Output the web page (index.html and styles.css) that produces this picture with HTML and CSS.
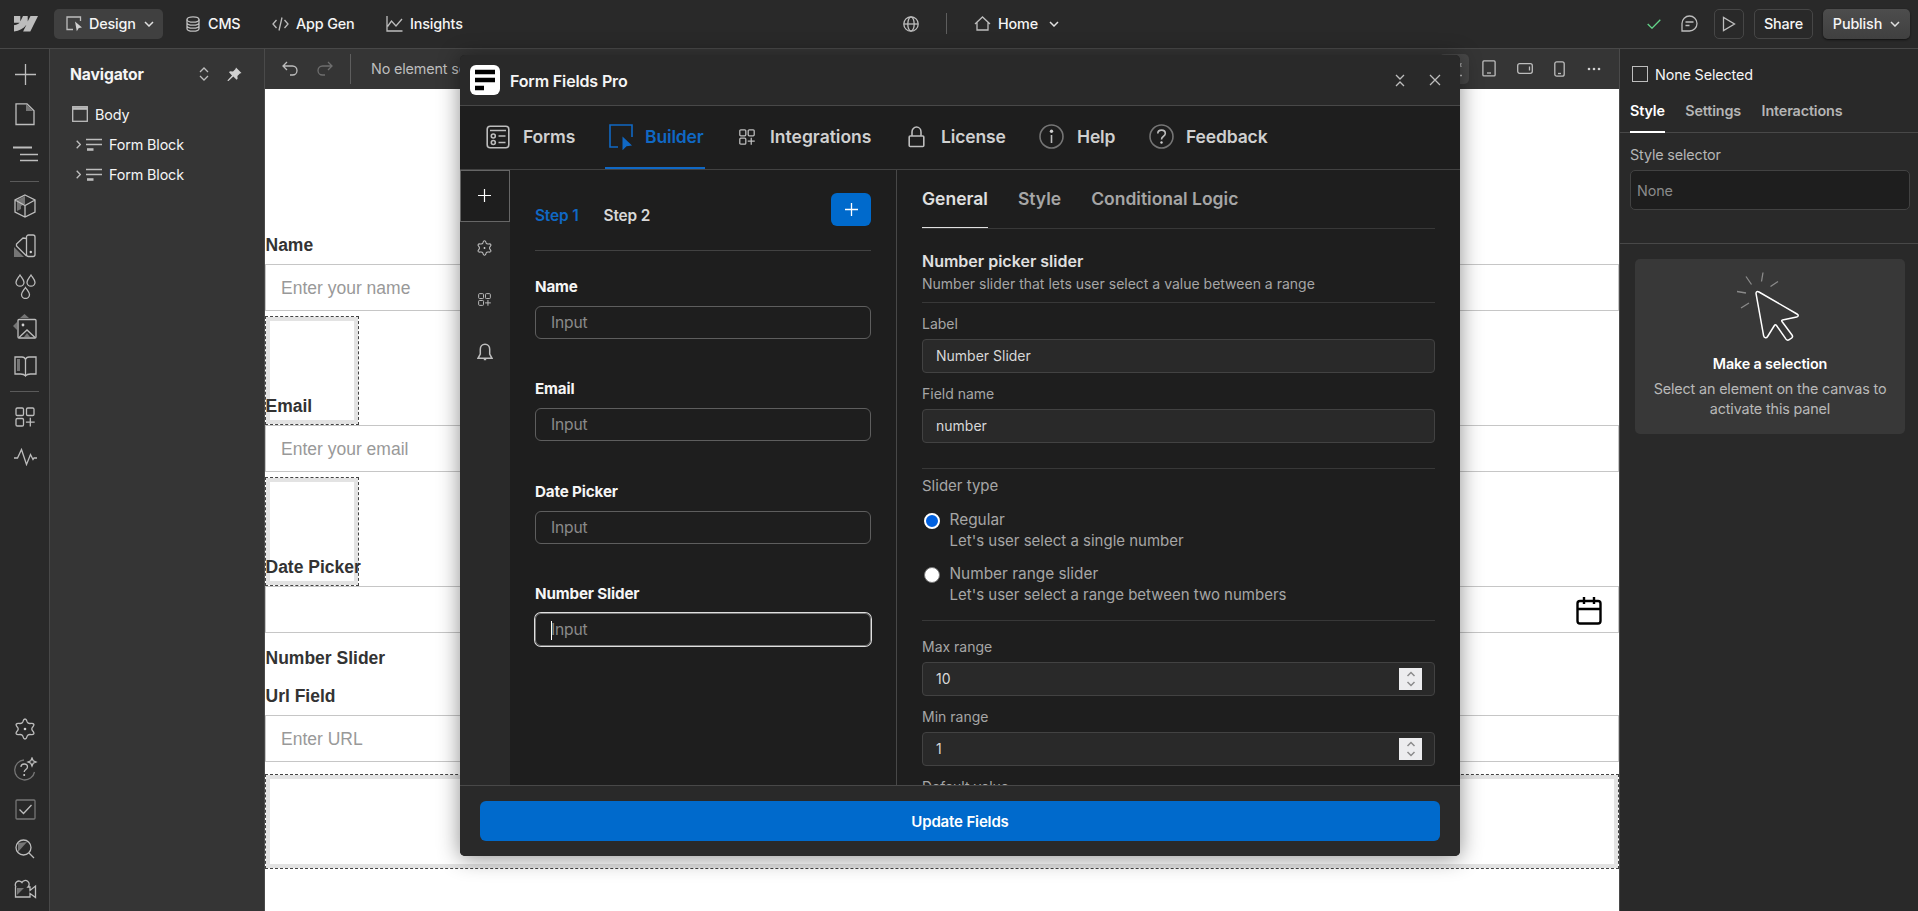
FILE: index.html
```
<!DOCTYPE html>
<html lang="en">
<head>
    <meta charset="UTF-8">
    <meta name="viewport" content="width=device-width, initial-scale=1.0">
    <title>Form Fields Pro</title>
    <link rel="stylesheet" href="styles.css">
</head>
<body>
    <svg class="defs" width="0" height="0">
        <symbol id="chevron" viewBox="0 0 10 6"><path d="M1 1l4 4 4-4"/></symbol>
        <symbol id="gear" viewBox="0 0 20 22"><path d="M10 1c1.800 0 1.700 1.800 2.200 3 .6 1.300 1.700 1.600 3 1.500 1.300-.1 2.800-.6 3.500.6.800 1.500-.6 2.300-1.300 3.300-.7 1-.7 2.200 0 3.200.7 1 2.100 1.800 1.300 3.300-.7 1.200-2.200.7-3.500.6-1.300-.1-2.400.2-3 1.500-.5 1.200-.4 3-2.200 3s-1.700-1.800-2.200-3c-.6-1.300-1.700-1.600-3-1.500-1.300.1-2.800.6-3.500-.6-.8-1.500.6-2.300 1.300-3.300.7-1 .7-2.200 0-3.200-.7-1-2.100-1.800-1.300-3.300.7-1.200 2.200-.7 3.500-.6 1.300.1 2.400-.2 3-1.500.5-1.200.4-3 2.200-3z"/><circle class="solid" cx="10" cy="11" r="1.300"/></symbol>
        <symbol id="apps" viewBox="0 0 20 20"><rect x="1" y="1" width="7.500" height="7.500" rx="1.300"/><rect x="11.500" y="1" width="7.500" height="7.500" rx="1.300"/><rect x="1" y="11.500" width="7.500" height="7.500" rx="1.300"/><path d="M15.300 10.800v8.800M10.900 15.200h8.800"/></symbol>
        <symbol id="form" viewBox="0 0 16 13"><path d="M0 1.500h16M0 6.500h16"/><path class="thick" d="M1 11.500h6.500"/></symbol>
        <symbol id="updown" viewBox="0 0 10 14"><path d="M1 5l4-4 4 4M1 9l4 4 4-4"/></symbol>
    </svg>

    <header class="topbar">
        <svg class="logo" width="24" height="16" viewBox="0 0 24 16"><path d="M24 0l-7.700 15.500H9.100l3.200-6.400h-.1C9.500 12.700 5.500 15 0 15.500V9.200s3.500-.2 5.600-2.400H0V0h6.300v5.300h.1L9 0h4.700v5.200h.1L16.500 0z"/></svg>
        <button class="mode active">
            <svg width="17" height="16" viewBox="0 0 17 16"><path d="M7 13.500H1V1h13.500v4"/><path class="solid" d="M9 5.500l7 6-3.200.5-2 3.300z"/></svg>
            Design
            <svg class="caret" width="10" height="6"><use href="#chevron"/></svg>
        </button>
        <a class="mode cms">
            <svg width="14" height="16" viewBox="0 0 14 16"><ellipse cx="7" cy="3.500" rx="6" ry="2.700"/><path d="M1 3.500v9c0 1.500 2.700 2.700 6 2.700s6-1.200 6-2.700v-9M1 6.500c0 1.500 2.700 2.700 6 2.700s6-1.200 6-2.700M1 9.500c0 1.500 2.700 2.700 6 2.700s6-1.200 6-2.700"/></svg>
            CMS
        </a>
        <a class="mode appgen">
            <svg width="17" height="14" viewBox="0 0 17 14"><path d="M4.500 3L1 7l3.500 4M12.500 3L16 7l-3.500 4M10 .5L7 13.500"/></svg>
            App Gen
        </a>
        <a class="mode insights">
            <svg width="17" height="16" viewBox="0 0 17 16"><path d="M1 0v15h15.500M1.500 10.500l4-5.500 4.500 5 6-7"/></svg>
            Insights
        </a>
        <svg class="globe" width="16" height="16" viewBox="0 0 16 16"><circle cx="8" cy="8" r="7.200"/><ellipse cx="8" cy="8" rx="3.200" ry="7.200"/><path d="M1 8h14"/></svg>
        <span class="bar"></span>
        <a class="mode home">
            <svg width="17" height="15" viewBox="0 0 17 15"><path d="M1 8l7.500-7L16 8M3 6.500V14h11V6.500"/></svg>
            Home
            <svg class="caret" width="10" height="6"><use href="#chevron"/></svg>
        </a>
        <div class="actions">
            <svg class="saved" width="14" height="10" viewBox="0 0 14 10"><path d="M.7 5l4.300 4.200L13.300.8"/></svg>
            <svg class="comment" width="17" height="17" viewBox="0 0 17 17"><path d="M1 16V8.500A7.500 7.500 0 1 1 8.500 16zM4.500 7h8M4.500 10.500h4"/></svg>
            <button class="btn play"><svg width="14" height="16" viewBox="0 0 14 16"><path d="M1.500 1.500v13L12.500 8z"/></svg></button>
            <button class="btn share">Share</button>
            <button class="btn publish">Publish <svg class="caret" width="10" height="6"><use href="#chevron"/></svg></button>
        </div>
    </header>

    <div class="workspace">
        <nav class="rail">
            <a><svg width="21" height="21" viewBox="0 0 21 21"><path d="M10.500 0v21M0 10.500h21"/></svg></a>
            <a><svg width="20" height="24" viewBox="0 0 20 24"><path class="dim" d="M11 2v7h7z"/><path d="M1 1.800h11l7 7V22.500H1z"/></svg></a>
            <a><svg width="25" height="16" viewBox="0 0 25 16"><path class="bold" d="M0 1.500h19"/><path d="M7 8.500h18M7 14.500h18"/></svg></a>
            <hr>
            <a><svg width="22" height="24" viewBox="0 0 22 24"><path class="dim" d="M3 6l8-4v8l-4 2v3l-4 2z"/><path d="M11 1l10 5v12l-10 5-10-5V6zM1 6l10 5.500L21 6M11 11.500V23"/></svg></a>
            <a><svg width="22" height="24" viewBox="0 0 22 24"><path class="dim" d="M0 13l10 10H0z"/><rect x="12.500" y="1" width="8.500" height="21.500" rx="2"/><path d="M12.500 4.500L9 4 2.500 10v2l10 10"/><circle class="solid" cx="16.800" cy="18" r="1.200"/></svg></a>
            <a><svg width="21" height="25" viewBox="0 0 21 25"><path d="M5 1C3 4 1 6 1 8.200a4 4 0 0 0 8 0C9 6 7 4 5 1zM16 1c-2 3-4 5-4 7.200a4 4 0 0 0 8 0C20 6 18 4 16 1zM10.500 13.500c-2 3-4 5-4 7a4 4 0 0 0 8 0c0-2-2-4-4-7z"/></svg></a>
            <a><svg width="24" height="25" viewBox="0 0 24 25"><path class="dim" d="M7 4l4.500-4L16 4zM4 8v8l-4-4zM11 23l3-4 3 4z"/><rect x="5" y="5.500" width="18" height="18.500" rx="1"/><path d="M6 23.500l8-7.500 8 7.500"/><circle class="solid" cx="10" cy="11" r="1.400"/></svg></a>
            <a><svg width="23" height="21" viewBox="0 0 23 21"><path class="dim" d="M3 3h3v12H3z"/><path d="M11.500 3.500v16M11.500 20c-1-1.500-3-2-5-2H1V1h7c2 0 3 1 3.500 2.500C12 2 13 1 15 1h7v17h-5.500c-2 0-4 .5-5 2z"/></svg></a>
            <hr>
            <a><svg width="20" height="20"><use href="#apps"/></svg></a>
            <a><svg width="23" height="18" viewBox="0 0 23 18"><path d="M0 10h3.500l4-8.500 5 15 4-10 2.500 5 1-1.500h3"/></svg></a>
            <div class="bottom">
                <a><svg width="20" height="22"><use href="#gear"/></svg></a>
                <a><svg width="25" height="24" viewBox="0 0 25 24"><path class="faint" d="M11 3a10 10 0 1 0 10.500 12"/><path d="M8 10c0-4 6.500-4 6.500 0 0 2.500-3.300 2.500-3.300 5M19 1l1.200 2.800L23 5l-2.800 1.200L19 9l-1.200-2.800L15 5l2.800-1.200z"/><circle class="solid" cx="11.200" cy="18" r="1"/></svg></a>
                <a><svg width="21" height="21" viewBox="0 0 21 21"><rect class="faint" x="1" y="1" width="19" height="19" rx="1"/><path d="M4.500 10.500l4 4 8-8.500"/></svg></a>
                <a><svg width="20" height="20" viewBox="0 0 20 20"><path class="dim" d="M3 13V4l9-1z"/><circle cx="8.500" cy="8.500" r="7.500"/><path d="M14 14l5 5"/></svg></a>
                <a><svg width="24" height="20" viewBox="0 0 24 20"><path class="dim" d="M4 9h7l-7 7z"/><path d="M3 8a3.700 3.700 0 1 1 6-4.500A3.800 3.800 0 1 1 15 8h2v3.500l5.500-4.500v11.500L17 14.500V18H2.500V8"/></svg></a>
            </div>
        </nav>

        <aside class="navigator">
            <div class="head">
                <h2>Navigator</h2>
                <svg width="10" height="14"><use href="#updown"/></svg>
                <svg class="pin" width="15" height="15" viewBox="0 0 15 15"><path class="solid" d="M9 .5L14.500 6l-1.600.4-2.500 2.600.2 2.800-1 1-3.300-3.300L1.500 14 .5 14l.3-1L5 8.500 2 5.300l1-1 3 .3 2.500-2.500z"/></svg>
            </div>
            <div class="node"><svg width="16" height="16" viewBox="0 0 16 16"><rect x=".7" y=".7" width="14.600" height="14.600"/><path class="thick" d="M1 2.500h14"/></svg>Body</div>
            <div class="node child"><svg class="arrow" width="5" height="9" viewBox="0 0 5 9"><path d="M.7.7l3.600 3.800L.7 8.300"/></svg><svg width="16" height="13"><use href="#form"/></svg>Form Block</div>
            <div class="node child"><svg class="arrow" width="5" height="9" viewBox="0 0 5 9"><path d="M.7.7l3.600 3.800L.7 8.300"/></svg><svg width="16" height="13"><use href="#form"/></svg>Form Block</div>
        </aside>

        <main class="stage">
            <div class="toolbar">
                <svg class="undo" width="16" height="15" viewBox="0 0 16 15"><path d="M5 1L1 5l4 4M1 5h9.500a4.500 4.500 0 0 1 0 9H8"/></svg>
                <svg class="redo" width="16" height="15" viewBox="0 0 16 15"><path d="M11 1l4 4-4 4M15 5H5.500a4.500 4.500 0 0 0 0 9H8"/></svg>
                <span class="bar"></span>
                <span class="crumb">No element selected</span>
                <div class="devices">
                    <span class="device on"><svg width="18" height="16" viewBox="0 0 18 16"><rect x="1" y="1" width="10" height="10"/><path d="M14 1v6M11.500 2.500l5 3M16.500 2.500l-5 3M14 9v5M11 14.500h6"/></svg></span>
                    <svg width="14" height="17" viewBox="0 0 14 17"><rect x=".9" y=".9" width="12.200" height="15" rx="1"/><path d="M5 13h4"/></svg>
                    <svg width="16" height="11" viewBox="0 0 16 11"><rect x=".7" y=".7" width="14.600" height="9.600" rx="2"/><path d="M12.500 3.500v4"/></svg>
                    <svg width="11" height="16" viewBox="0 0 11 16"><rect x=".8" y=".8" width="9.400" height="14.400" rx="2"/><path d="M4 12.500h3"/></svg>
                    <svg class="more" width="14" height="4" viewBox="0 0 14 4"><circle class="solid" cx="2" cy="2" r="1.300"/><circle class="solid" cx="7" cy="2" r="1.300"/><circle class="solid" cx="12" cy="2" r="1.300"/></svg>
                </div>
            </div>
            <div class="canvas">
                <label>Name</label>
                <div class="input">Enter your name</div>
                <div class="placeholder"></div>
                <label class="over">Email</label>
                <div class="input">Enter your email</div>
                <div class="placeholder"></div>
                <label class="over">Date Picker</label>
                <div class="input date"><svg width="26" height="28" viewBox="0 0 26 28"><rect x="1.500" y="4" width="23" height="22.500" rx="2.500"/><path d="M1.500 12h23M8 0v7M18 0v7"/></svg></div>
                <label class="slider">Number Slider</label>
                <label class="url">Url Field</label>
                <div class="input">Enter URL</div>
                <div class="placeholder wide"></div>
            </div>
        </main>

        <aside class="panel">
            <div class="selected"><span class="box"></span>None Selected</div>
            <div class="tabs"><a class="active">Style</a><a>Settings</a><a>Interactions</a></div>
            <div class="selector">
                <div class="caption">Style selector</div>
                <div class="field">None</div>
            </div>
            <div class="hint">
                <svg width="64" height="72" viewBox="0 0 64 72"><path class="rays" d="M1 20.500l9 1.500M10 5.500l5.500 8M27 1.500l-1.500 9M34.500 15.500l7.500-5M5 37l8-5"/><path class="cursor" d="M20 22.500c0-2 1.300-2.400 3-1.500l38 22c1.800 1 1.500 2.600-.3 3l-14.200 3c-.9.200-1 .8-.5 1.500l10 13.500c.9 1.200.8 2-.3 3l-2.500 1.700c-1.200.8-2.300.6-3.200-.6L40.500 54.500c-.7-.9-1.500-.9-2.100 0l-6.800 11c-1.200 1.800-3.600 1.500-4-.8z"/></svg>
                <h3>Make a selection</h3>
                <p>Select an element on the canvas to activate this panel</p>
            </div>
        </aside>
    </div>

    <section class="modal">
        <div class="modal-head">
            <svg width="30" height="30" viewBox="0 0 30 30"><rect class="tile" width="30" height="30" rx="6"/><path class="lines" d="M5 7h20M5 15h20M5 23h9"/></svg>
            <h1>Form Fields Pro</h1>
            <svg class="collapse" width="10" height="13" viewBox="0 0 10 13"><path d="M1 1l4 4 4-4M1 12l4-4 4 4"/></svg>
            <svg width="12" height="12" viewBox="0 0 12 12"><path d="M1 1l10 10M11 1L1 11"/></svg>
        </div>
        <nav class="modal-tabs">
            <a class="t-forms"><svg width="24" height="24" viewBox="0 0 24 24"><rect x="1.200" y="1.200" width="21.600" height="21.600" rx="3"/><path d="M4 5.500h16M12.500 11h7M12.500 17.500h7"/><circle cx="7.300" cy="11" r="2"/><circle cx="7.300" cy="17.500" r="2"/></svg>Forms</a>
            <a class="t-builder active"><svg width="24" height="26" viewBox="0 0 24 26"><path d="M9 23H1V1h22v12"/><path class="solid" d="M13.500 12.500l9.500 9-5.500.8-4 4z"/></svg>Builder</a>
            <a class="t-integrations"><svg width="16" height="16"><use href="#apps"/></svg>Integrations</a>
            <a class="t-license"><svg width="17" height="22" viewBox="0 0 17 22"><rect x="1.200" y="10" width="14.600" height="10.500" rx="1"/><path d="M4 10V6a4.500 5 0 0 1 9 0v4"/></svg>License</a>
            <a class="t-help"><svg width="25" height="25" viewBox="0 0 25 25"><circle class="faint" cx="12.500" cy="12.500" r="11.500"/><path d="M12.500 11v8"/><circle class="solid" cx="12.500" cy="7.200" r="1.700"/></svg>Help</a>
            <a class="t-feedback"><svg width="25" height="25" viewBox="0 0 25 25"><circle class="faint" cx="12.500" cy="12.500" r="11.500"/><path d="M8.800 9.500c0-4.500 7.500-4.500 7.500 0 0 3-3.800 2.500-3.800 6"/><circle class="solid" cx="12.500" cy="18.500" r="1.200"/></svg>Feedback</a>
        </nav>
        <div class="modal-body">
            <div class="side">
                <a class="active"><svg width="13" height="13" viewBox="0 0 13 13"><path d="M6.500 0v13M0 6.500h13"/></svg></a>
                <a><svg width="15" height="16"><use href="#gear"/></svg></a>
                <a><svg width="13" height="13"><use href="#apps"/></svg></a>
                <a><svg width="16" height="18" viewBox="0 0 16 18"><path d="M8 1.300c-3 0-4.700 2.300-4.700 5V11L1 15.300h14L12.700 11V6.300c0-2.700-1.700-5-4.700-5zM6.800 16.500h2.400"/></svg></a>
            </div>
            <div class="builder">
                <div class="steps">
                    <a class="active">Step 1</a><a>Step 2</a>
                    <button class="add"><svg width="13" height="13" viewBox="0 0 13 13"><path d="M6.500 0v13M0 6.500h13"/></svg></button>
                </div>
                <div class="item"><h4>Name</h4><div class="in">Input</div></div>
                <div class="item"><h4>Email</h4><div class="in">Input</div></div>
                <div class="item"><h4>Date Picker</h4><div class="in">Input</div></div>
                <div class="item"><h4>Number Slider</h4><div class="in focus">Input</div></div>
            </div>
            <div class="settings">
                <div class="settings-tabs"><a class="active">General</a><a>Style</a><a>Conditional Logic</a></div>
                <div class="intro">
                    <h3>Number picker slider</h3>
                    <p>Number slider that lets user select a value between a range</p>
                </div>
                <div class="group">
                    <div class="row"><span>Label</span><div class="val">Number Slider</div></div>
                    <div class="row"><span>Field name</span><div class="val">number</div></div>
                </div>
                <div class="types">
                    <div class="type-title">Slider type</div>
                    <div class="option"><i class="radio checked"></i><p><b>Regular</b><br>Let's user select a single number</p></div>
                    <div class="option"><i class="radio"></i><p><b>Number range slider</b><br>Let's user select a range between two numbers</p></div>
                </div>
                <div class="group">
                    <div class="row"><span>Max range</span><div class="val">10<b class="spin"><svg width="10" height="16" viewBox="0 0 10 16"><path d="M1.500 5L5 1.500 8.500 5M1.500 11L5 14.500 8.500 11"/></svg></b></div></div>
                    <div class="row"><span>Min range</span><div class="val">1<b class="spin"><svg width="10" height="16" viewBox="0 0 10 16"><path d="M1.500 5L5 1.500 8.500 5M1.500 11L5 14.500 8.500 11"/></svg></b></div></div>
                    <div class="row"><span>Default value</span></div>
                </div>
            </div>
        </div>
        <div class="modal-foot"><button>Update Fields</button></div>
    </section>
</body>
</html>
```
FILE: styles.css
```
* {
    box-sizing: border-box;
}
body {
    margin: 0;
    height: 911px;
    overflow: hidden;
    position: relative;
    background: #292929;
    color: #f5f5f5;
    font-family: Inter, "Liberation Sans", sans-serif;
    font-size: 14.375px;
    letter-spacing: -0.01em;
}
h1, h2, h3, h4, p {
    margin: 0;
}
button {
    font: inherit;
    letter-spacing: inherit;
    color: inherit;
    border: 0;
    padding: 0;
}
svg {
    flex: none;
    fill: none;
    stroke: #bdbdbd;
    stroke-width: 1.3;
}
.solid { fill: #d0d0d0; stroke: none; }
.thick { stroke-width: 2.6; }
.bold { stroke-width: 2; }
.dim { fill: #757575; stroke: none; }
.faint { stroke: #757575; }
.defs { position: absolute; }
.bar { width: 1px; background: #5e5e5e; }

/* top bar */
.topbar {
    display: flex;
    align-items: center;
    height: 49px;
    padding: 0 8px 1px 14px;
    border-bottom: 1px solid #484848;
    background: #292929;
    position: relative;
}
.logo { fill: #bdbdbd; stroke: none; }
.mode {
    display: flex;
    align-items: center;
    gap: 7px;
    height: 30px;
    font-weight: 500;
}
.mode.active {
    width: 109px;
    margin-left: 16px;
    padding-left: 12px;
    gap: 6px;
    border-radius: 5px;
    background: #404040;
}
.caret { stroke: #e0e0e0; stroke-width: 1.5; margin-left: 2px; }
.cms { margin-left: 23px; gap: 8px; width: 86px; }
.appgen { width: 114px; }
.insights { width: 517px; }
.globe { width: 16px; }
.topbar .bar { height: 21px; margin: 0 27px; }
.home .caret { margin-left: 4px; }
.actions {
    display: flex;
    align-items: center;
    margin-left: auto;
}
.saved { stroke: #63d489; margin-right: 20px; }
.comment { margin-right: 16px; }
.btn {
    display: flex;
    align-items: center;
    justify-content: center;
    height: 30px;
    border: 1px solid #464646;
    border-radius: 5px;
    background: none;
    font-weight: 500;
}
.play { width: 30px; margin-right: 10px; }
.share { width: 59px; margin-right: 10px; }
.publish {
    width: 87px;
    gap: 7px;
    border: 0;
    background: linear-gradient(#4d4d4d, #404040);
    box-shadow: 0 1px 2px #111;
}
.publish .caret { margin-left: 1px; }

.workspace {
    display: flex;
    height: 862px;
}

/* left icon rail */
.rail {
    display: flex;
    flex-direction: column;
    width: 50px;
    padding: 5px 0 2px;
    border-right: 1px solid #484848;
    background: #292929;
}
.rail a {
    display: flex;
    align-items: center;
    justify-content: center;
    height: 40px;
    padding-left: 1px;
}
.rail hr {
    flex: none;
    width: 29px;
    height: 1px;
    margin: 7px 10px 4px;
    border: 0;
    background: #5a5a5a;
}
.rail hr + a ~ hr { margin: 5px 10px; }
.bottom { margin-top: auto; }

/* navigator */
.navigator {
    width: 215px;
    padding-left: 20px;
    border-right: 1px solid #4a4a4a;
    background: #353535;
}
.head {
    display: flex;
    align-items: center;
    height: 50px;
}
.head h2 {
    width: 129px;
    font-size: 15.700px;
    font-weight: 700;
}
.pin { margin-left: 18px; }
.node {
    display: flex;
    align-items: center;
    gap: 7px;
    height: 30px;
    padding-left: 2px;
}
.child { padding-left: 6px; gap: 7px; }
.arrow { margin-right: -2px; }

/* canvas */
.stage {
    width: 1354px;
    background: #fff;
}
.toolbar {
    display: flex;
    align-items: center;
    height: 40px;
    padding: 0 18px 1px 17px;
    background: #353535;
    color: #bdbdbd;
}
.redo { margin-left: 19px; stroke: #6e6e6e; }
.toolbar .bar { height: 30px; margin: 0 20px 0 17px; }
.devices {
    display: flex;
    align-items: center;
    gap: 21px;
    margin-left: auto;
}
.device.on {
    display: flex;
    align-items: center;
    justify-content: center;
    width: 30px;
    height: 30px;
    margin-right: -8px;
    border-radius: 5px;
    background: #484848;
}
.more { margin-left: 1px; }
.canvas {
    padding-top: 144px;
    color: #333;
    font: 17.500px/25px Arial, "Liberation Sans", sans-serif;
    letter-spacing: 0;
}
.canvas label {
    display: block;
    position: relative;
    margin-bottom: 6px;
    padding-left: .5px;
    font-weight: 700;
}
.input {
    display: flex;
    align-items: center;
    height: 47px;
    padding: 2px 15px 0;
    border: 1px solid #c6c6c6;
    color: #999;
}
.date { justify-content: flex-end; padding-right: 16px; }
.date svg { stroke: #000; stroke-width: 2.4; }
.canvas .over { margin-top: -31px; }
.canvas .slider { margin-top: 13px; margin-bottom: 0; }
.canvas .url { margin-top: 13px; }
.placeholder {
    width: 94px;
    height: 109px;
    margin-top: 5px;
    border: 1px dashed #444;
    box-shadow: inset 0 0 0 4px #e3e3e3;
}
.wide {
    width: auto;
    height: 95px;
    margin-top: 12px;
}

/* style panel */
.panel {
    flex: 1;
    border-left: 1px solid #4a4a4a;
    background: #292929;
}
.selected {
    display: flex;
    align-items: center;
    gap: 7px;
    height: 50px;
    padding-left: 12px;
}
.box {
    width: 16px;
    height: 16px;
    border: 1px solid #bdbdbd;
}
.tabs {
    display: flex;
    gap: 20.500px;
    height: 34px;
    padding-left: 10px;
    border-bottom: 1px solid #484848;
    color: #b5b5b5;
    font-weight: 600;
}
.tabs a {
    height: 34px;
    line-height: 24px;
}
.tabs .active {
    color: #fff;
    border-bottom: 2px solid #fff;
}
.selector {
    height: 111px;
    padding: 12px 8px 0 10px;
    border-bottom: 1px solid #484848;
    color: #b5b5b5;
}
.caption { line-height: 20px; }
.field {
    height: 40px;
    margin-top: 5px;
    padding-left: 6px;
    border: 1px solid #424242;
    border-radius: 5px;
    background: #1e1e1e;
    color: #8a8a8a;
    line-height: 39px;
}
.hint {
    width: 270px;
    height: 175px;
    margin: 15px 0 0 15px;
    padding: 12px 15px 0;
    border-radius: 5px;
    background: #383838;
    color: #b8b8b8;
    text-align: center;
    line-height: 20px;
}
.hint svg { display: block; margin: 0 auto 11px 86px; }
.rays { stroke: #8a8a8a; }
.cursor { stroke: #fff; stroke-width: 1.500; }
.hint h3 {
    margin-bottom: 5px;
    color: #fff;
    font-size: 14.375px;
    font-weight: 600;
}

/* app window */
.modal {
    position: absolute;
    left: 460px;
    top: 55px;
    width: 1000px;
    height: 801px;
    overflow: hidden;
    border-radius: 5px;
    background: #1e1e1e;
    box-shadow: 0 2px 22px rgba(0, 0, 0, .45);
}
.modal-head {
    display: flex;
    align-items: center;
    height: 51px;
    padding: 0 19px 0 10px;
    border-bottom: 1px solid #484848;
    background: #292929;
}
.tile { fill: #fff; stroke: none; }
.lines { stroke: #000; stroke-width: 4.500; }
.modal-head h1 {
    margin: 2px 0 0 10px;
    font-size: 16px;
    font-weight: 600;
}
.collapse { margin: 0 24px 0 auto; }
.modal-tabs {
    display: flex;
    height: 64px;
    border-bottom: 1px solid #424242;
    color: #d0d0d0;
    font-size: 17.500px;
    font-weight: 600;
}
.modal-tabs a {
    display: flex;
    align-items: center;
    height: 63px;
    padding-bottom: 2px;
    gap: 13px;
}
.modal-tabs svg { stroke-width: 1.600; }
.t-forms { width: 119px; margin-left: 26px; }
.t-builder { width: 100px; padding-left: 4px; }
.modal-tabs .active {
    padding-bottom: 0;
    color: #1068c4;
    border-bottom: 2px solid #1068c4;
}
.modal-tabs .t-builder { gap: 12px; }
.t-builder svg { stroke: #1068c4; }
.t-builder .solid { fill: #1068c4; }
.t-integrations { width: 133px; margin-left: 34px; }
.modal-tabs .t-integrations { gap: 15px; letter-spacing: 0; }
.t-license { width: 101px; margin-left: 36px; }
.modal-tabs .t-license { gap: 16px; }
.t-help { width: 110px; margin-left: 30px; }
.modal-tabs .t-feedback { gap: 12px; }
.modal-body {
    display: flex;
    height: 615px;
    overflow: hidden;
}
.side {
    width: 50px;
    background: #292929;
}
.side a {
    display: flex;
    align-items: center;
    justify-content: center;
    height: 52px;
    padding-bottom: 1px;
    padding-right: 1px;
}
.side svg { stroke-width: 1.500; }
.side .active {
    border: 1px solid #666;
    background: #1e1e1e;
}
.side .active svg { stroke: #fff; stroke-width: 1.200; }
.builder {
    width: 387px;
    padding: 0 25px;
    border-right: 1px solid #484848;
}
.steps {
    display: flex;
    height: 81px;
    padding-top: 23px;
    border-bottom: 1px solid #424242;
    color: #d8d8d8;
    font-size: 15.400px;
    font-weight: 600;
}
.steps a { margin-right: 25px; line-height: 45px; }
.steps .active { color: #1068c4; }
.add {
    display: flex;
    align-items: center;
    justify-content: center;
    width: 40px;
    height: 33px;
    padding: 0 0 1px 1px;
    margin-left: auto;
    border-radius: 6px;
    background: #006acc;
}
.add svg { stroke: #fff; }
.item {
    height: 102.400px;
    padding-top: 26px;
}
.item h4 {
    height: 29px;
    font-size: 15.200px;
    font-weight: 700;
    line-height: 20px;
}
.in {
    height: 33px;
    padding-left: 15px;
    border: 1px solid #5e5e5e;
    border-radius: 6px;
    color: #8a8a8a;
    font-size: 15.600px;
    line-height: 32px;
}
.focus {
    border-color: #777;
    box-shadow: 0 0 0 1px #e0e0e0;
}
.focus::before {
    content: "";
    display: inline-block;
    width: 1px;
    height: 19px;
    margin-right: -1px;
    vertical-align: middle;
    background: #fff;
}
.settings {
    flex: 1;
    padding: 0 25px;
    color: #a6a6a6;
    font-size: 14px;
    letter-spacing: 0;
}
.settings-tabs {
    display: flex;
    gap: 30px;
    height: 59px;
    border-bottom: 1px solid #383838;
    font-size: 17.500px;
    font-weight: 600;
    line-height: 58px;
}
.settings-tabs .active {
    height: 58px;
    color: #e0e0e0;
    border-bottom: 1px solid #e0e0e0;
}
.intro {
    height: 74px;
    padding-top: 20px;
    border-bottom: 1px solid #383838;
    line-height: 20px;
}
.intro h3 {
    margin-bottom: 1px;
    color: #e0e0e0;
    font-size: 16px;
    font-weight: 600;
    line-height: 24px;
}
.group { padding-top: 11px; }
.row { margin-bottom: 11px; line-height: 20px; }
.row span { display: block; margin-bottom: 5px; }
.val {
    display: flex;
    align-items: center;
    justify-content: space-between;
    height: 34px;
    padding: 0 12px 0 13px;
    border: 1px solid #424242;
    border-radius: 4px;
    background: #292929;
    color: #d8d8d8;
}
.spin {
    display: flex;
    align-items: center;
    justify-content: center;
    width: 23px;
    height: 22px;
    background: #ececee;
}
.spin svg { stroke: #8c8c8c; stroke-width: 1.500; }
.types {
    height: 153px;
    margin-top: 25px;
    padding-top: 7px;
    border-top: 1px solid #383838;
    border-bottom: 1px solid #383838;
    font-size: 15px;
}
.types + .group { padding-top: 16px; }
.type-title { line-height: 20px; margin-bottom: 13px; }
.option {
    display: flex;
    gap: 10px;
    margin-bottom: 12px;
    line-height: 21px;
}
.option b { font-size: 15.400px; font-weight: 400; }
.radio {
    width: 16px;
    height: 16px;
    margin: 4px 0 0 1.500px;
    border-radius: 50%;
    background: #fff;
    border: 1px solid #767676;
}
.checked {
    border: 2px solid #fff;
    background: #0060df;
}
.modal-foot {
    height: 71px;
    padding: 15px 20px;
    border-top: 1px solid #484848;
    background: #292929;
}
.modal-foot button {
    display: block;
    width: 960px;
    height: 40px;
    border-radius: 6px;
    background: #006acc;
    color: #fff;
    font-size: 15px;
    font-weight: 600;
}
```
